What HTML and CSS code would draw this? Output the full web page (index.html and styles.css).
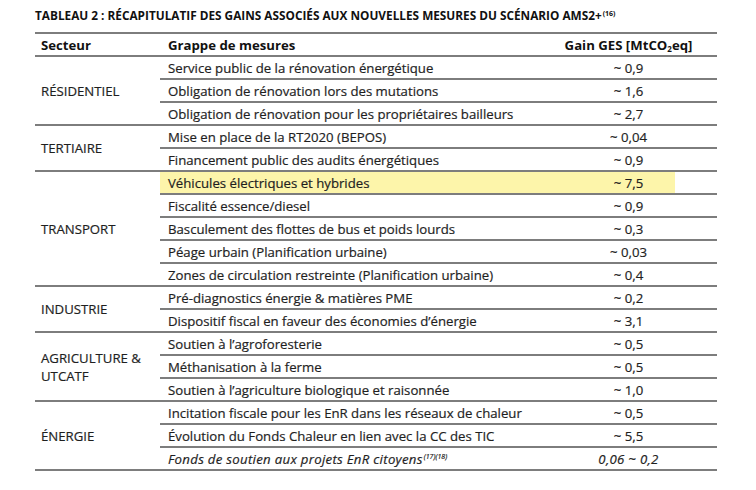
FILE: index.html
```html
<!DOCTYPE html>
<html lang="fr">
<head>
<meta charset="utf-8">
<link rel="stylesheet" href="styles.css">
</head>
<body>
<div class="page">
  <h1 class="title">TABLEAU 2 : RÉCAPITULATIF DES GAINS ASSOCIÉS AUX NOUVELLES MESURES DU SCÉNARIO AMS2+<sup>(16)</sup></h1>
  <table class="tbl">
    <colgroup><col class="c1"><col class="c2"><col class="c3"></colgroup>
    <thead>
      <tr><th class="sec">Secteur</th><th class="mes">Grappe de mesures</th><th class="gain">Gain GES [MtCO<sub>2</sub>eq]</th></tr>
    </thead>
    <tbody>
      <tr><td class="sec" rowspan="3">RÉSIDENTIEL</td><td>Service public de la rénovation énergétique</td><td class="val">~ 0,9</td></tr>
      <tr><td>Obligation de rénovation lors des mutations</td><td class="val">~ 1,6</td></tr>
      <tr><td>Obligation de rénovation pour les propriétaires bailleurs</td><td class="val">~ 2,7</td></tr>
      <tr><td class="sec" rowspan="2">TERTIAIRE</td><td>Mise en place de la RT2020 (BEPOS)</td><td class="val">~ 0,04</td></tr>
      <tr><td>Financement public des audits énergétiques</td><td class="val">~ 0,9</td></tr>
      <tr class="hl"><td class="sec" rowspan="5">TRANSPORT</td><td class="hl-m">Véhicules électriques et hybrides</td><td class="val hl-v">~ 7,5</td></tr>
      <tr><td>Fiscalité essence/diesel</td><td class="val">~ 0,9</td></tr>
      <tr><td>Basculement des flottes de bus et poids lourds</td><td class="val">~ 0,3</td></tr>
      <tr><td>Péage urbain (Planification urbaine)</td><td class="val">~ 0,03</td></tr>
      <tr><td>Zones de circulation restreinte (Planification urbaine)</td><td class="val">~ 0,4</td></tr>
      <tr><td class="sec" rowspan="2">INDUSTRIE</td><td>Pré-diagnostics énergie &amp; matières PME</td><td class="val">~ 0,2</td></tr>
      <tr><td>Dispositif fiscal en faveur des économies d’énergie</td><td class="val">~ 3,1</td></tr>
      <tr><td class="sec" rowspan="3">AGRICULTURE &amp;<br>UTCATF</td><td>Soutien à l’agroforesterie</td><td class="val">~ 0,5</td></tr>
      <tr><td>Méthanisation à la ferme</td><td class="val">~ 0,5</td></tr>
      <tr><td>Soutien à l’agriculture biologique et raisonnée</td><td class="val">~ 1,0</td></tr>
      <tr><td class="sec" rowspan="3">ÉNERGIE</td><td>Incitation fiscale pour les EnR dans les réseaux de chaleur</td><td class="val">~ 0,5</td></tr>
      <tr><td>Évolution du Fonds Chaleur en lien avec la CC des TIC</td><td class="val">~ 5,5</td></tr>
      <tr class="it"><td>Fonds de soutien aux projets EnR citoyens<sup>(17)(18)</sup></td><td class="val">0,06 ~ 0,2</td></tr>
    </tbody>
  </table>
</div>
</body>
</html>
```

FILE: styles.css
```css
html, body {
  margin: 0;
  padding: 0;
  background: #ffffff;
}
.page {
  padding: 8px 0 0 35px;
  width: 682px;
  font-family: "Open Sans", "Noto Sans", sans-serif;
  color: #1f1f1f;
}
.title {
  margin: 0 0 9px 0;
  font-size: 11.8px;
  font-weight: 700;
  line-height: 15px;
  color: #111111;
  white-space: nowrap;
  letter-spacing: 0;
}
.title sup {
  font-size: 7px;
  vertical-align: 4px;
  line-height: 0;
  margin-left: 1px;
}
.tbl {
  width: 682px;
  border-collapse: collapse;
  table-layout: fixed;
  font-size: 13.2px;
  border-top: 2px solid #7d7d7d;
  -webkit-text-stroke: 0.2px #1f1f1f;
}
.c1 { width: 125px; }
.c2 { width: 380px; }
.c3 { width: 177px; }
.tbl th {
  font-weight: 700;
  text-align: left;
  height: 21px;
  padding: 0 0 0 6px;
  border-bottom: 2px solid #7d7d7d;
  color: #111111;
  line-height: 20px;
  -webkit-text-stroke: 0;
}
.tbl th.mes { padding-left: 8px; }
.tbl th.gain { text-align: center; padding-left: 0; }
.tbl th sub {
  font-size: 8px;
  vertical-align: -2px;
  line-height: 0;
}
.tbl td {
  height: 21px;
  padding: 0 0 0 8px;
  border-bottom: 2px solid #7d7d7d;
  line-height: 18px;
  white-space: nowrap;
}
.tbl td.sec {
  padding-left: 6px;
  vertical-align: middle;
  line-height: 18px;
}
.tbl td.val {
  text-align: center;
  padding-left: 0;
}
.hl-m {
  background: #fdf5aa;
}
.hl-v {
  background: linear-gradient(to right, #fdf5aa 0, #fdf5aa 135px, transparent 135px);
}
.it td {
  font-style: italic;
  letter-spacing: 0.3px;
}
.it sup {
  font-size: 7px;
  vertical-align: 5px;
  line-height: 0;
  margin-left: 1px;
  letter-spacing: 0;
}
```
